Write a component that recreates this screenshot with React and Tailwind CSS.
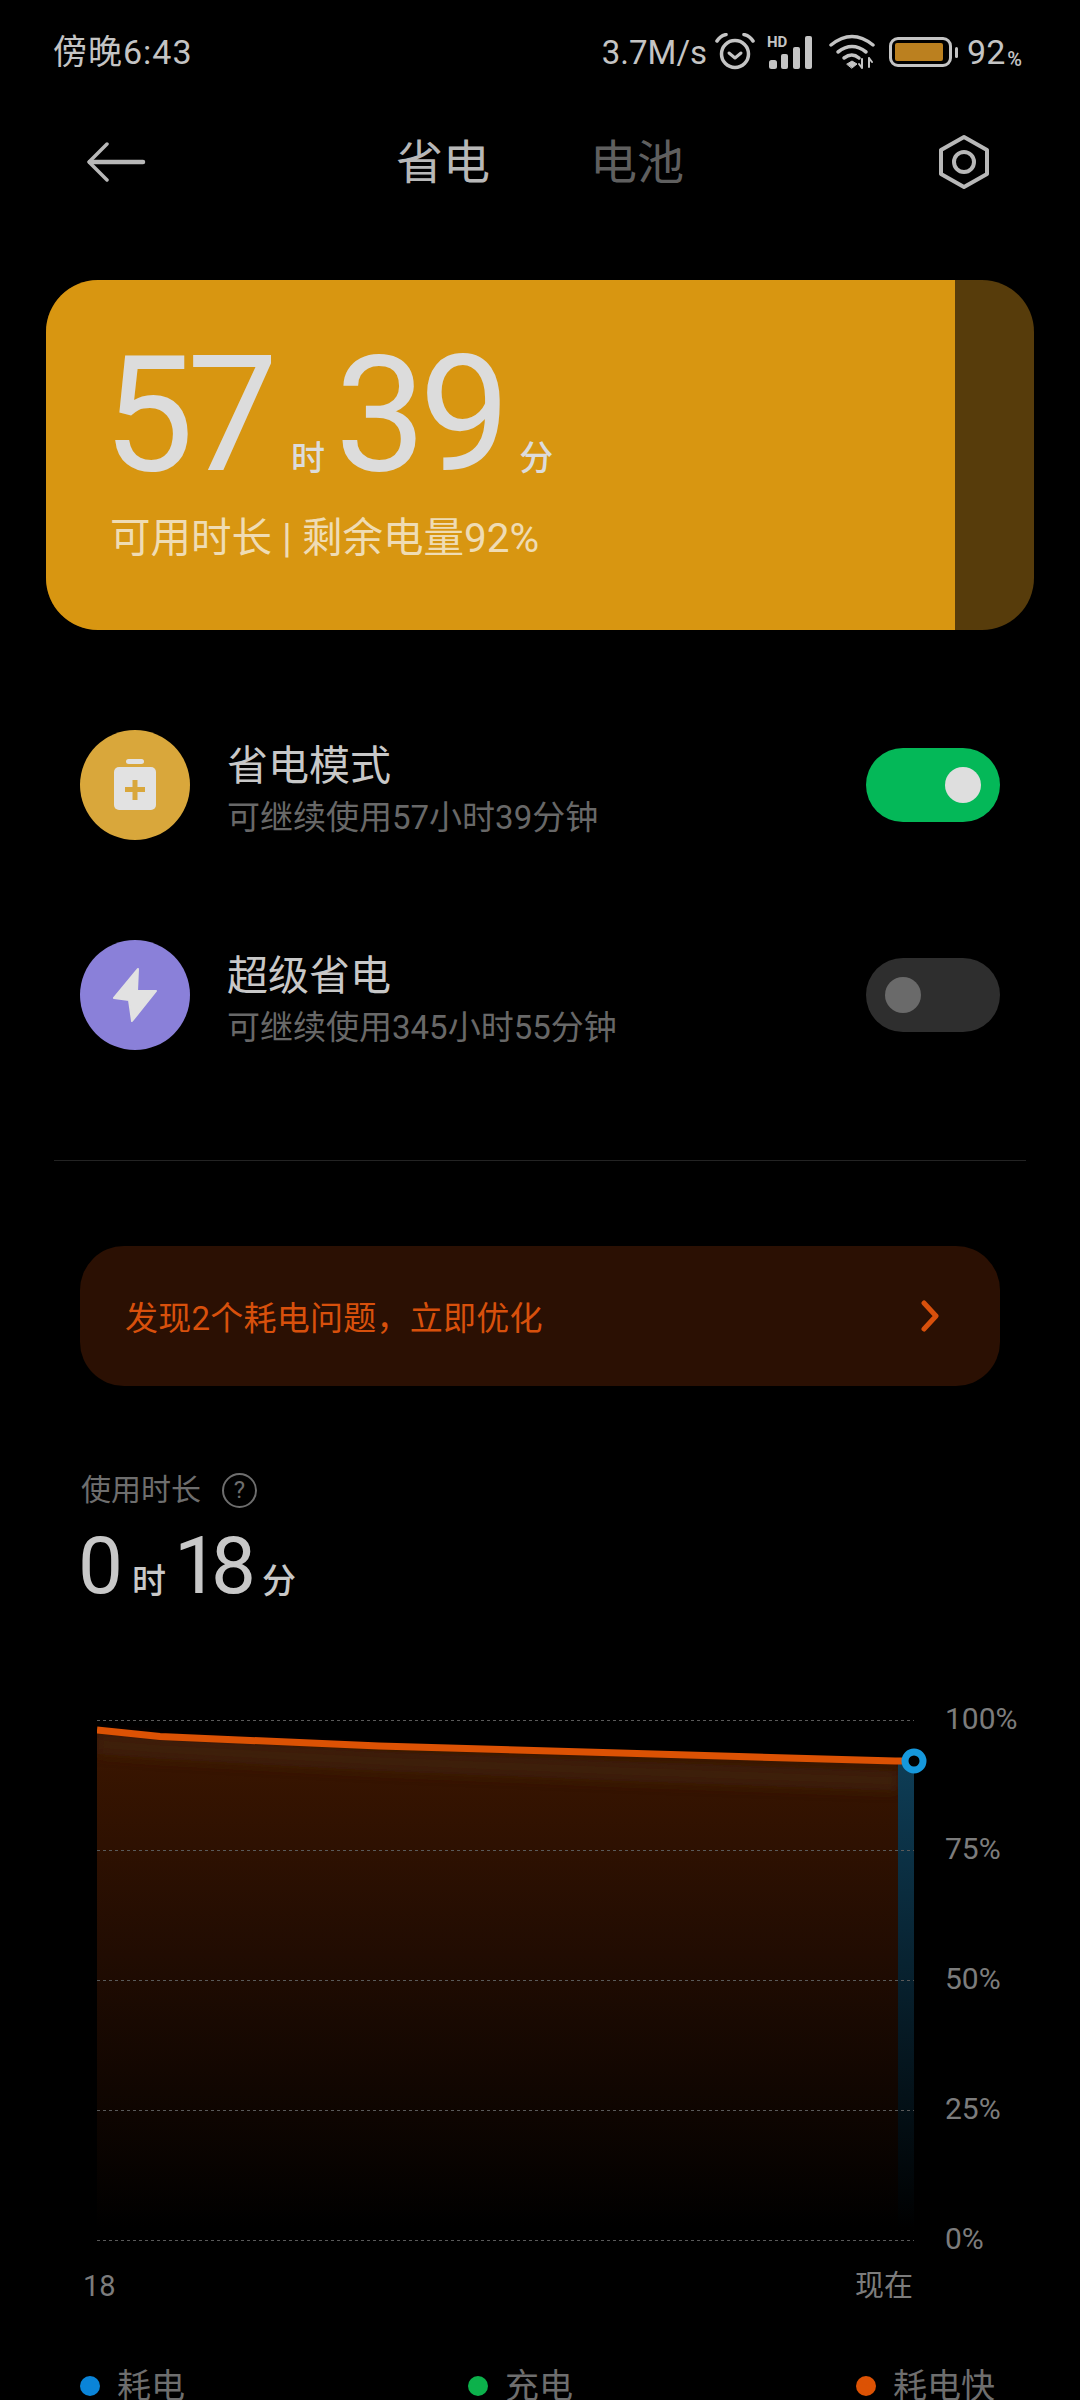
const LINE = 'M0 31 L63 37.5 L282 47 L523 54 L798 62 L806 62'

function AlarmIcon() {
  return (
    <svg width="40" height="38" viewBox="0 0 40 38" fill="none" stroke="#c4c4c4">
      <circle cx="20" cy="21" r="13.5" strokeWidth="3.5" />
      <path d="M14 20 L20 25 L26 20" strokeWidth="3" strokeLinecap="round" strokeLinejoin="round" />
      <path d="M2 8 Q5 3 11 1.5" strokeWidth="3.5" strokeLinecap="round" />
      <path d="M38 8 Q35 3 29 1.5" strokeWidth="3.5" strokeLinecap="round" />
    </svg>
  )
}

function SignalIcon() {
  return (
    <svg className="overflow-visible" width="50" height="34" viewBox="0 0 50 34" fill="#c4c4c4">
      <text x="0" y="12" fontSize="15" fontWeight="700" fontFamily="Roboto, sans-serif">HD</text>
      <rect x="2" y="25" width="8" height="9" rx="2.5" />
      <rect x="14" y="19" width="7" height="15" rx="2" />
      <rect x="26" y="12" width="7" height="22" rx="2" />
      <rect x="38" y="1" width="7" height="33" rx="2" />
    </svg>
  )
}

function WifiIcon() {
  return (
    <svg width="48" height="36" viewBox="0 0 48 36" fill="none" stroke="#c4c4c4" strokeLinecap="round">
      <path d="M2 11 Q23 -6 44 11" strokeWidth="3.5" />
      <path d="M9 18 Q23 7 37 18" strokeWidth="3.5" />
      <path d="M15 24 Q23 18 30 24" strokeWidth="3.5" />
      <path d="M18 30 L23 27 L28 30 L23 34 Z" fill="#c4c4c4" strokeWidth="1" strokeLinejoin="round" />
      <path d="M33 25 V34 M30 30 L33 34 M40 24 V33 M40 24 L43 28" strokeWidth="2" />
    </svg>
  )
}

function BatteryIcon() {
  return (
    <div className="flex items-center gap-[3px]">
      <div className="w-[63px] h-[30px] rounded-[9px] border-[3px] border-[#c4c4c4] p-[3px]">
        <div className="w-[48px] h-full rounded-[2px] bg-[#bb801f]" />
      </div>
      <div className="w-[3px] h-[11px] rounded-full bg-[#c4c4c4]" />
    </div>
  )
}

function StatusBar() {
  return (
    <div className="h-[104px] pl-[53px] pr-[58px] flex items-center justify-between text-[#c4c4c4]">
      <div className="text-[34px] leading-none tracking-[1px]">傍晚6:43</div>
      <div className="flex items-center">
        <span className="text-[33px] leading-none">3.7M/s</span>
        <span className="ml-[8px]"><AlarmIcon /></span>
        <span className="ml-[12px]"><SignalIcon /></span>
        <span className="ml-[12px]"><WifiIcon /></span>
        <span className="ml-[12px]"><BatteryIcon /></span>
        <span className="ml-[9px] text-[34px] leading-none">92</span>
        <span className="ml-[2px] text-[20px] font-medium leading-none self-end mb-[2px]">%</span>
      </div>
    </div>
  )
}

function NavBar() {
  return (
    <div className="h-[116px] flex items-center pl-[86px] pr-[90px]">
      <svg width="60" height="40" viewBox="0 0 60 40" fill="none" stroke="#b8b8b8" strokeLinecap="round">
        <path d="M21 2 L3 20 L21 38" strokeWidth="3.5" strokeLinejoin="round" />
        <path d="M4 20 H57" strokeWidth="4.5" />
      </svg>
      <div className="ml-[250px] text-[47px] leading-none text-[#b8b8b8]">省电</div>
      <div className="ml-[100px] text-[47px] leading-none text-[#5f5f5f]">电池</div>
      <svg className="ml-auto" width="52" height="56" viewBox="0 0 52 56" fill="none" stroke="#b8b8b8" strokeWidth="4">
        <path d="M26 3 L49 16 V40 L26 53 L3 40 V16 Z" strokeLinejoin="round" />
        <circle cx="26" cy="28" r="10" />
      </svg>
    </div>
  )
}

function BatteryCard() {
  return (
    <div className="mt-[60px] mx-[46px] h-[350px] rounded-[52px] overflow-hidden flex bg-[#573c0b]">
      <div className="w-[909px] bg-[#d89611] pl-[57px] pt-[60px]">
        <div className="flex items-baseline text-[#dcdcdc] h-[150px]">
          <span className="text-[162px] leading-[150px] tracking-[-7px]">57</span>
          <span className="ml-[20px] text-[34px] font-medium leading-none">时</span>
          <span className="ml-[10px] text-[162px] leading-[150px] tracking-[-7px]">39</span>
          <span className="ml-[16px] text-[34px] font-medium leading-none">分</span>
        </div>
        <div className="mt-[24px] ml-[7px] text-[40.5px] leading-[48px] text-[#efdcb4]">可用时长 | 剩余电量92%</div>
      </div>
    </div>
  )
}

function ModeRow({ color, icon, title, sub, on, className }) {
  return (
    <div className={`mx-[80px] h-[110px] flex items-center ${className}`}>
      <div className={`w-[110px] h-[110px] rounded-full ${color}`}>{icon}</div>
      <div className="ml-[37px] pt-[8px]">
        <div className="text-[41px] leading-[50px] text-[#c8c8c8]">{title}</div>
        <div className="mt-[7px] text-[33px] leading-[40px] text-[#686868]">{sub}</div>
      </div>
      {on ? (
        <div className="ml-auto w-[134px] h-[74px] rounded-full bg-[#04b858] flex items-center justify-end pr-[19px]">
          <div className="w-[36px] h-[36px] rounded-full bg-[#dedede]" />
        </div>
      ) : (
        <div className="ml-auto w-[134px] h-[74px] rounded-full bg-[#2e2e2e] flex items-center pl-[19px]">
          <div className="w-[36px] h-[36px] rounded-full bg-[#6a6a6a]" />
        </div>
      )}
    </div>
  )
}

function SaverIcon() {
  return (
    <svg width="110" height="110" viewBox="0 0 110 110">
      <rect x="46" y="29" width="18" height="5" rx="2.5" fill="#e2e2e2" />
      <rect x="34" y="37" width="42" height="43" rx="5" fill="#e2e2e2" />
      <path d="M55 50 V70 M45 59.5 H65" stroke="#d9a73b" strokeWidth="5" />
    </svg>
  )
}

function BoltIcon() {
  return (
    <svg width="110" height="110" viewBox="0 0 110 110">
      <path d="M58 29 L34 58 L49 60 L52 81 L76 51 L57 51 Z" fill="#e2e2e2" stroke="#e2e2e2" strokeWidth="2" strokeLinejoin="round" />
    </svg>
  )
}

function Chart() {
  return (
    <div className="mt-[93px] ml-[97px] flex h-[560px]">
      <svg width="833" height="560" viewBox="0 0 833 560" fill="none">
        <defs>
          <linearGradient id="area" x1="0" y1="31" x2="0" y2="530" gradientUnits="userSpaceOnUse">
            <stop offset="0" stopColor="#3c1600" />
            <stop offset="0.45" stopColor="#210c02" />
            <stop offset="1" stopColor="#000000" />
          </linearGradient>
          <linearGradient id="drain" x1="0" y1="62" x2="0" y2="530" gradientUnits="userSpaceOnUse">
            <stop offset="0" stopColor="#0e3d56" />
            <stop offset="1" stopColor="#000000" />
          </linearGradient>
          <filter id="soft" x="-5%" y="-100%" width="110%" height="300%">
            <feGaussianBlur stdDeviation="6" />
          </filter>
        </defs>
        <path d="M0 31 L63 37.5 L282 47 L523 54 L801 62 V541 H0 Z" fill="url(#area)" />
        <path d="M0 45 L63 50 L282 62 L523 72 L801 82" stroke="#40240a" strokeWidth="20" filter="url(#soft)" opacity="0.8" />
        <rect x="801" y="62" width="16" height="470" fill="url(#drain)" />
        {[21.5, 151.5, 281.5, 411.5, 541.5].map(y => (
          <path key={y} d={`M0 ${y} H817`} stroke="#5a5a5a" strokeWidth="1" strokeDasharray="3 3" />
        ))}
        <path d={LINE} stroke="#dc5204" strokeWidth="7" />
        <circle cx="817" cy="62" r="9" fill="#000" stroke="#1698dc" strokeWidth="7" />
      </svg>
      <div className="ml-[15px] flex flex-col justify-between text-[30px] leading-[40px] text-[#7c7c7c]">
        <span>100%</span>
        <span>75%</span>
        <span>50%</span>
        <span>25%</span>
        <span>0%</span>
      </div>
    </div>
  )
}

function Legend({ color, label }) {
  return (
    <div className="flex items-center">
      <div className={`w-[20px] h-[20px] rounded-full ${color}`} />
      <span className="ml-[17px] text-[34px] leading-[44px] text-[#6e6e6e]">{label}</span>
    </div>
  )
}

export default function App() {
  return (
    <div lang="zh-CN" className="w-[1080px] h-[2400px] overflow-hidden bg-black font-['Roboto','Noto_Sans_CJK_SC',sans-serif]">
      <StatusBar />
      <NavBar />
      <BatteryCard />

      <ModeRow className="mt-[100px]" color="bg-[#d9a73b]" icon={<SaverIcon />} title="省电模式" sub="可继续使用57小时39分钟" on />
      <ModeRow className="mt-[100px]" color="bg-[#8a80d9]" icon={<BoltIcon />} title="超级省电" sub="可继续使用345小时55分钟" />

      <div className="mt-[110px] mx-[54px] h-px bg-[#232323]" />

      <div className="mt-[85px] mx-[80px] h-[140px] rounded-[44px] bg-[#2b1003] flex items-center justify-between pl-[45px] pr-[60px]">
        <span className="pt-[5px] text-[33px] tracking-[0.25px] leading-none text-[#d8500c]">发现2个耗电问题，立即优化</span>
        <svg width="20" height="32" viewBox="0 0 20 32" fill="none" stroke="#d8500c" strokeWidth="5" strokeLinecap="round" strokeLinejoin="round">
          <path d="M4 3 L16 16 L4 29" />
        </svg>
      </div>

      <div className="mt-[84px] ml-[81px] flex items-center h-[40px]">
        <span className="text-[30px] leading-none text-[#6e6e6e]">使用时长</span>
        <div className="ml-[21px] w-[35px] h-[35px] rounded-full border-2 border-[#6e6e6e] flex items-center justify-center text-[24px] leading-none text-[#6e6e6e]">?</div>
      </div>

      <div className="mt-[16px] ml-[78px] flex items-baseline h-[80px] text-[#c8c8c8]">
        <span className="text-[80px] leading-[80px]">0</span>
        <span className="ml-[9px] text-[34px] font-medium leading-none">时</span>
        <span className="ml-[8px] text-[80px] leading-[80px] tracking-[-8px]">18</span>
        <span className="ml-[14px] text-[34px] font-medium leading-none">分</span>
      </div>

      <Chart />

      <div className="mt-[7px] ml-[83px] w-[830px] flex justify-between text-[29px] leading-[40px] text-[#7c7c7c]">
        <span>18</span>
        <span>现在</span>
      </div>

      <div className="mt-[58px] ml-[80px] grid grid-cols-[388px_388px_auto]">
        <Legend color="bg-[#0a84d8]" label="耗电" />
        <Legend color="bg-[#0cb14b]" label="充电" />
        <Legend color="bg-[#dc5204]" label="耗电快" />
      </div>
    </div>
  )
}
